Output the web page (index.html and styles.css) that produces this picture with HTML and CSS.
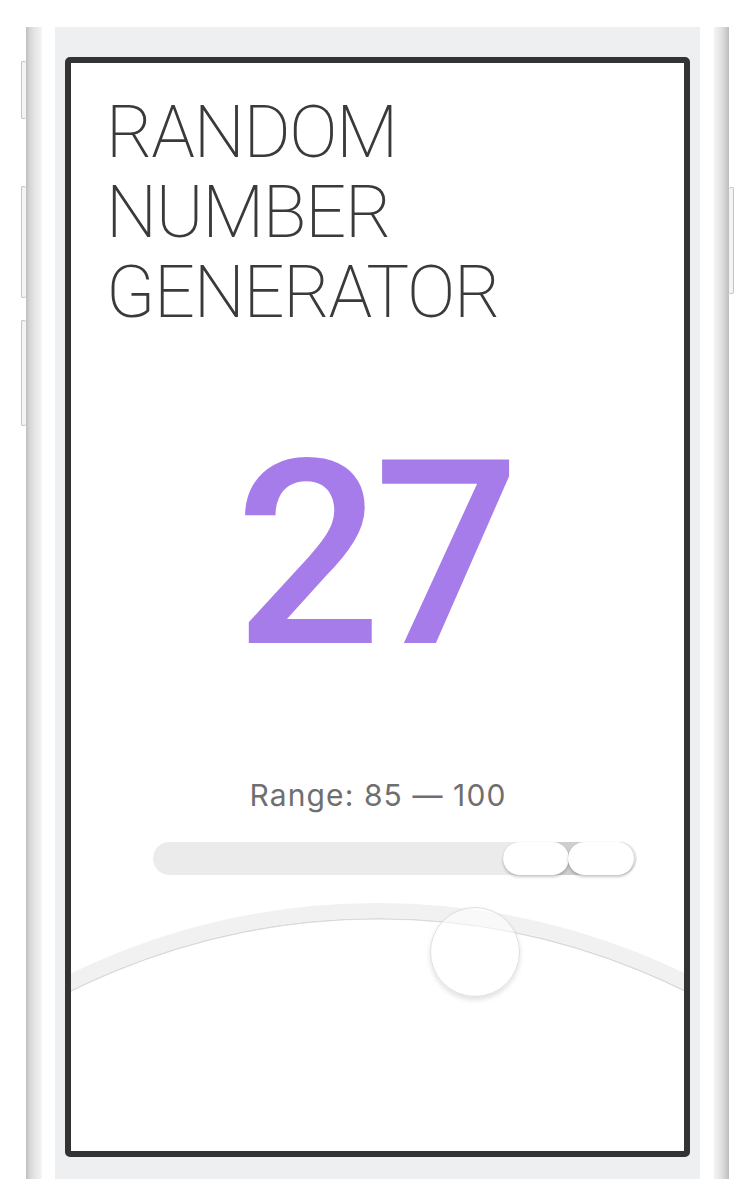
FILE: index.html
```html
<!DOCTYPE html>
<html>
<head>
<meta charset="utf-8">
<link rel="stylesheet" href="styles.css">
</head>
<body>
<div class="phone">
  <div class="rail rail-left">
    <span class="btn btn-mute"></span>
    <span class="btn btn-vol-up"></span>
    <span class="btn btn-vol-down"></span>
  </div>
  <div class="bezel">
    <div class="screen">
      <h1 class="title">RANDOM<br>NUMBER<br>GENERATOR</h1>
      <div class="number">27</div>
      <div class="range-label">Range: 85 — 100</div>
      <div class="slider">
        <div class="slider-fill"></div>
        <div class="thumb thumb-min"></div>
        <div class="thumb thumb-max"></div>
      </div>
      <div class="arc"></div>
      <div class="knob"></div>
    </div>
  </div>
  <div class="rail rail-right">
    <span class="btn btn-power"></span>
  </div>
</div>
</body>
</html>
```
FILE: styles.css
```css
html, body {
  margin: 0;
  padding: 0;
  background: #ffffff;
}
body {
  width: 746px;
  height: 1204px;
  overflow: hidden;
  font-family: Roboto, "Liberation Sans", sans-serif;
}
.phone {
  display: flex;
  margin-top: 27px;
  margin-left: 26px;
  height: 1152px;
}
.rail {
  position: relative;
  width: 16px;
  height: 100%;
}
.rail-left {
  background: linear-gradient(to right, #bdbdbd 0, #d3d3d3 3px, #e4e4e4 8px, #f0f0f0 14px, #f7f7f7 16px);
  margin-right: 13px;
}
.rail-right {
  width: 15px;
  margin-left: 14px;
  background: linear-gradient(to right, #f3f3f3 0, #e6e6e6 6px, #d2d2d2 11px, #bdbdbd 15px);
}
.btn {
  position: absolute;
  width: 4px;
  border: 1px solid #c4c4c4;
  border-radius: 2px;
  background: #f4f4f4;
}
.rail-left .btn { left: -5px; border-right: none; }
.btn-mute { top: 34px; height: 56px; }
.btn-vol-up { top: 159px; height: 110px; }
.btn-vol-down { top: 293px; height: 104px; }
.btn-power { right: -5px; left: auto; top: 160px; height: 105px; border-left: none; }

.bezel {
  width: 645px;
  height: 100%;
  box-sizing: border-box;
  background: #eeeff0;
  padding: 30px 10px 22px 10px;
}
.screen {
  position: relative;
  overflow: hidden;
  box-sizing: border-box;
  height: 1100px;
  border: 6px solid #333333;
  border-radius: 5px;
  background: #ffffff;
  display: flex;
  flex-direction: column;
}
.title {
  margin: 30px 0 0 35px;
  font-family: Roboto, "Liberation Sans", sans-serif;
  font-weight: 200;
  font-size: 72px;
  line-height: 80px;
  color: #3a3a3a;
  letter-spacing: -1.3px;
}
.number {
  margin-top: 92px;
  height: 260px;
  font-family: Roboto, "Liberation Sans", sans-serif;
  font-weight: 500;
  font-size: 258px;
  line-height: 260px;
  text-align: center;
  color: #a67cea;
  letter-spacing: -8px;
  text-indent: -8px;
}
.range-label {
  margin-top: 93px;
  padding-left: 1px;
  font-family: Inter, Roboto, sans-serif;
  font-size: 30px;
  line-height: 34px;
  letter-spacing: 1.1px;
  text-align: center;
  color: #6f6f6f;
}
.slider {
  position: relative;
  margin: 30px 0 0 82px;
  width: 484px;
  height: 33px;
  border-radius: 17px;
  background: #ebebec;
}
.slider-fill {
  position: absolute;
  left: 380px;
  width: 70px;
  top: 0;
  height: 33px;
  background: #cfcfd0;
}
.thumb {
  position: absolute;
  top: 0;
  height: 33px;
  width: 66px;
  border-radius: 17px;
  background: #ffffff;
  box-shadow: 0 2px 3px rgba(0, 0, 0, 0.22), 0 0 1px rgba(0, 0, 0, 0.15);
}
.thumb-min { left: 350px; }
.thumb-max { left: 415px; }

.arc {
  position: absolute;
  left: -398px;
  top: 840px;
  width: 1410px;
  height: 1410px;
  box-sizing: border-box;
  border-radius: 50%;
  border: 15px solid #f1f1f2;
  box-shadow: inset 0 0 0 1.5px #dadada;
}
.knob {
  position: absolute;
  left: 359px;
  top: 844px;
  width: 90px;
  height: 90px;
  box-sizing: border-box;
  border-radius: 50%;
  border: 1px solid #dedede;
  background: rgba(255, 255, 255, 0.55);
  box-shadow: 0 3px 5px rgba(0, 0, 0, 0.12);
}
```
